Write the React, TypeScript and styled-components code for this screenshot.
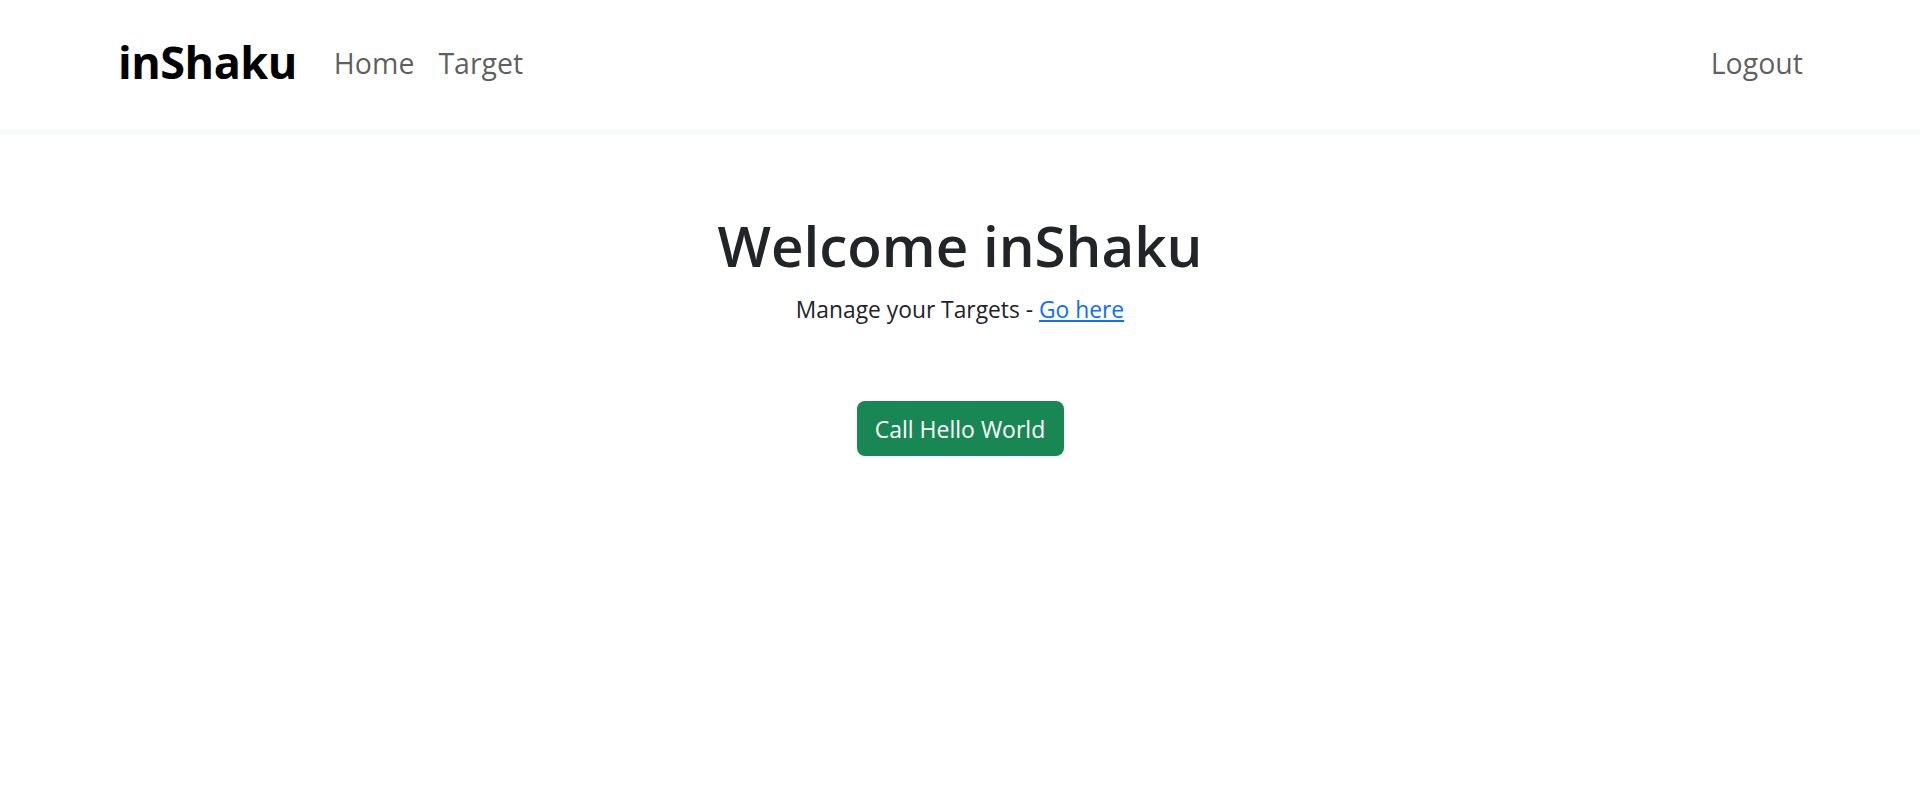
import React from "react";
import styled, { createGlobalStyle } from "styled-components";

const Global = createGlobalStyle`
  html, body { margin: 0; padding: 0; background: #fff; }
  body { font-family: "Open Sans", "Noto Sans", sans-serif; color: #212529; }
  * { box-sizing: border-box; }
`;

const Nav = styled.nav`
  height: 129px;
  display: flex;
  align-items: center;
  justify-content: space-between;
  padding: 0 105px 4px 118px;
  background: #fff;
  border-bottom: 6px solid #f8f9fa;
  box-sizing: border-box;
  height: 135px;
`;

const Left = styled.div`
  display: flex;
  align-items: center;
`;

const Brand = styled.a`
  font-size: 45px;
  font-weight: 700;
  color: #000;
  text-decoration: none;
  margin-right: 25px;
  letter-spacing: -0.5px;
  margin-top: -2px;
`;

const NavLink = styled.a`
  font-size: 28.5px;
  color: rgba(0, 0, 0, 0.65);
  text-decoration: none;
  padding: 0 12px;
`;

const Main = styled.main`
  display: flex;
  flex-direction: column;
  align-items: center;
  padding-top: 77px;
`;

const Title = styled.h1`
  font-size: 56.5px;
  font-weight: 600;
  margin: 0;
  line-height: 1.2;
  color: #212529;
`;

const Sub = styled.p`
  font-size: 22.8px;
  margin: 16px 0 0;
  line-height: 1.2;
  color: #212529;
`;

const Link = styled.a`
  color: #0d6efd;
  text-decoration: underline;
`;

const Button = styled.button`
  margin-top: 78px;
  width: 207px;
  height: 55px;
  border: none;
  border-radius: 8px;
  background: #198754;
  color: #fff;
  font-family: inherit;
  font-size: 23px;
  cursor: pointer;
`;

export default function App() {
  return (
    <>
      <Global />
      <Nav>
        <Left>
          <Brand href="#">inShaku</Brand>
          <NavLink href="#">Home</NavLink>
          <NavLink href="#">Target</NavLink>
        </Left>
        <NavLink href="#">Logout</NavLink>
      </Nav>
      <Main>
        <Title>Welcome inShaku</Title>
        <Sub>
          Manage your Targets - <Link href="#">Go here</Link>
        </Sub>
        <Button>Call Hello World</Button>
      </Main>
    </>
  );
}
